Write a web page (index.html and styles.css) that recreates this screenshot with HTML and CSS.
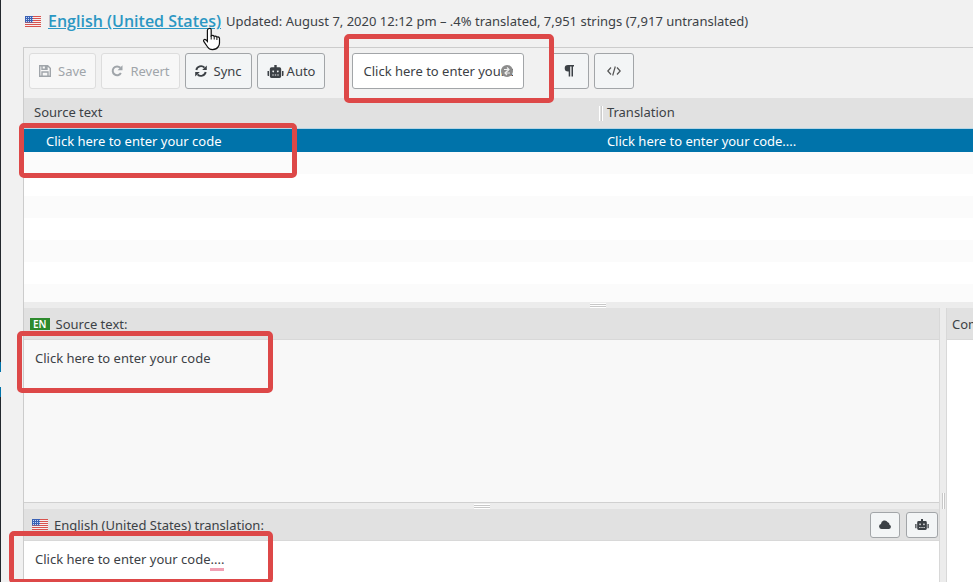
FILE: index.html
```html
<!DOCTYPE html>
<html lang="en">

<head>
    <meta charset="utf-8">
    <title>Translation editor</title>
    <link rel="stylesheet" href="styles.css">
</head>

<body>
  <svg class="defs" aria-hidden="true">
    <symbol id="flag" viewBox="0 0 16 11">
      <rect width="16" height="11" fill="#f6eeee"/>
      <path d="M0 .5h16M0 2.5h16M0 4.5h16M0 6.5h16M0 8.5h16M0 10.5h16" stroke="#d8524d"/>
      <rect width="8" height="6.500" fill="#3b62b5"/>
      <path d="M1 1.500h7M1 3.500h7M1 5.500h7" stroke="#c6d6f3" stroke-dasharray="1 1"/>
    </symbol>
    <symbol id="robot" viewBox="0 0 16 13">
      <path fill="currentColor" fill-rule="evenodd" d="M6.800 0h2.400v2.300h2.800q1.700 0 1.700 1.700v7.300q0 1.700-1.700 1.700h-8q-1.700 0-1.700-1.700v-7.300q0-1.700 1.700-1.700h2.800zM5.700 5.400a.9.900 0 1 0 .01 0zM10.300 5.400a.9.900 0 1 0 .01 0zM4.800 9.500v1h1.400v-1zM7.300 9.500v1h1.400v-1zM9.800 9.500v1h1.400v-1zM0 6h1.500v5h-.7q-.8 0-.8-.8zM14.500 6h1.500v4.200q0 .8-.8.800h-.7z"/>
    </symbol>
  </svg>

  <div class="menu-edge"></div>

  <main class="page">
    <header class="title">
      <svg class="flag"><use href="#flag"/></svg>
      <a href="#" class="locale">English (United States)</a>
      <span>Updated: August 7, 2020 12:12 pm – .4% translated, 7,951 strings (7,917 untranslated)</span>
    </header>

    <div class="editor">
      <form class="toolbar">
        <button type="button" class="btn" disabled>
          <svg width="12" height="12" viewBox="0 0 12 12" fill="none" stroke="currentColor" stroke-width="1.400"><path d="M.7.700h8l2.600 2.600v8h-10.600zM3 1v3.200h5v-3.200M3 11v-4h6v4M6.600 1v3"/></svg>
          Save
        </button>
        <button type="button" class="btn" disabled>
          <svg width="12" height="12" viewBox="0 0 12 12"><path d="M9.300 2.800a4.400 4.400 0 1 0 .6 5.300" fill="none" stroke="currentColor" stroke-width="2"/><path d="M11.500.3v5h-5z" fill="currentColor"/></svg>
          Revert
        </button>
        <button type="button" class="btn">
          <svg width="12" height="12" viewBox="0 0 12 12"><path d="M1.300 5a4.800 4.800 0 0 1 8.200-2.300M10.700 7a4.800 4.800 0 0 1-8.200 2.300" fill="none" stroke="currentColor" stroke-width="1.900"/><path d="M11.800.4v4.600h-4.600zM.2 11.600v-4.600h4.600z" fill="currentColor"/></svg>
          Sync
        </button>
        <button type="button" class="btn auto">
          <svg width="17" height="13"><use href="#robot"/></svg>
          Auto
        </button>
        <div class="search">
          <input type="text" aria-label="Filter translations" value="Click here to enter your code">
          <button type="button" class="clear" aria-label="Clear filter">
            <svg width="12" height="12" viewBox="0 0 12 12"><circle cx="6" cy="6" r="6" fill="#8c8c8c"/><path d="M3 4.500h4.500M6 2.500l2 2-2 2M9 8h-4.500M6 6l-2 2 2 2" fill="none" stroke="#eee" stroke-width="1.200"/></svg>
          </button>
        </div>
        <button type="button" class="btn square" aria-label="Toggle invisibles">
          <svg width="10" height="12" viewBox="0 0 10 12" fill="currentColor"><path d="M4 0h6v1.400h-1v10.100h-1.500v-10.100h-1.300v10.100h-1.500v-4.900h-.7a3.300 3.300 0 0 1 0-6.600z"/></svg>
        </button>
        <button type="button" class="btn square code" aria-label="Toggle code view">
          <svg width="14" height="10" viewBox="0 0 14 10" fill="none" stroke="currentColor" stroke-width="1.200"><path d="M4 1.500l-3.200 3.500 3.200 3.500M10 1.500l3.200 3.500-3.200 3.500M8.300.5l-2.600 9"/></svg>
        </button>
      </form>

      <table class="strings">
        <thead>
          <tr><th class="source">Source text</th><th>Translation</th></tr>
        </thead>
        <tbody>
          <tr class="selected"><td>Click here to enter your code</td><td>Click here to enter your code....</td></tr>
          <tr><td></td><td></td></tr>
          <tr><td></td><td></td></tr>
          <tr><td></td><td></td></tr>
          <tr><td></td><td></td></tr>
          <tr><td></td><td></td></tr>
          <tr><td></td><td></td></tr>
          <tr class="last"><td></td><td></td></tr>
        </tbody>
      </table>

      <div class="split main-split"><i class="grip"></i></div>

      <div class="panes">
        <div class="texts">
          <div class="bar">
            <span class="lang">EN</span>
            <label for="source">Source text:</label>
          </div>
          <textarea id="source" class="field source-field" readonly>Click here to enter your code</textarea>
          <div class="split"><i class="grip"></i></div>
          <div class="bar target">
            <svg class="flag"><use href="#flag"/></svg>
            <span id="target-label">English (United States) translation:</span>
            <button type="button" class="btn small" aria-label="Suggestions">
              <svg width="12" height="9" viewBox="0 0 12 9" fill="currentColor"><path d="M2.600 9a2.600 2.600 0 0 1-.6-5.100 3.600 3.600 0 0 1 6.700-1.700 2.200 2.200 0 0 1 1.700 2.500 2.200 2.200 0 0 1-.6 4.300z"/></svg>
            </button>
            <button type="button" class="btn small" aria-label="Auto translate">
              <svg width="14" height="11"><use href="#robot"/></svg>
            </button>
          </div>
          <div class="field target-field" contenteditable="true" role="textbox" spellcheck="false" aria-labelledby="target-label">Click here to enter your code<span class="misspelt">....</span></div>
        </div>
        <div class="split vertical"><i class="grip"></i></div>
        <div class="comments">
          <div class="bar"><label for="comments">Comments:</label></div>
          <textarea id="comments" class="field"></textarea>
        </div>
      </div>
    </div>
  </main>

  <!-- highlights and pointer, drawn over the editor -->
  <div class="mark mark-search"></div>
  <div class="mark mark-row"></div>
  <div class="mark mark-source"></div>
  <div class="mark mark-target"></div>
  <svg class="pointer" viewBox="0 0 18 24"><path d="M6 1.500q1.900-.6 2.200 1.300v6q1.800-1.200 3 .5 1.700-.8 2.600.8 2.500-.7 2.700 1.400v4.500q0 2-1.200 3.600-1.800 3-5.800 3-3.300 0-4.900-2.600l-3.700-5.300q-.9-1.600.5-2.200 1.200-.3 3 1.800v-11q0-1.300 1.600-1.800z" fill="#fff" stroke="#111" stroke-width="1.200"/><path d="M8.200 8.500v4M11.200 9.500v3M13.900 10.500v2.500" stroke="#111"/></svg>
</body>

</html>
```

FILE: styles.css
```css
* {
  box-sizing: border-box;
}

body {
  display: flex;
  height: 100vh;
  margin: 0;
  overflow: hidden;
  background: #f1f1f1;
  color: #3c4146;
  font-family: "Noto Sans", "Open Sans", sans-serif;
  font-size: 13px;
  line-height: 20px;
}

button, input, textarea {
  margin: 0;
  color: inherit;
  font: inherit;
}

svg {
  display: block;
  flex: none;
}

.defs {
  position: absolute;
  width: 0;
  height: 0;
}

.menu-edge {
  flex: none;
  width: 1px;
  background: linear-gradient(#23282d 362px, #0073aa 362px, #0073aa 372px, #f1f1f1 372px, #f1f1f1 387px, #0073aa 387px, #0073aa 397px, #23282d 397px);
}

.page {
  display: flex;
  flex: 1;
  flex-direction: column;
  min-width: 0;
  padding-left: 22px;
}

.title {
  display: flex;
  align-items: center;
  height: 47px;
  padding: 0 0 5px 2px;
  white-space: nowrap;
}

.flag {
  width: 16px;
  height: 11px;
}

.locale {
  margin: 0 5px 0 7px;
  color: #2b97c3;
  font-family: "Open Sans", sans-serif;
  font-size: 16px;
  font-weight: 600;
}

.editor {
  display: flex;
  flex: 1;
  flex-direction: column;
  min-height: 0;
  border: solid #ccc;
  border-width: 1px 0 0 1px;
}

/* toolbar */
.toolbar {
  display: flex;
  gap: 5px;
  padding: 5px 5px 9px;
}

.btn {
  display: flex;
  align-items: center;
  justify-content: center;
  gap: 7px;
  height: 36px;
  padding: 0 9px;
  border: 1px solid #a2a5a8;
  border-radius: 3px;
  background: #f3f5f6;
}

.btn:disabled {
  border-color: #ddd;
  background: #f7f7f7;
  color: #a0a5aa;
}

.auto {
  gap: 3px;
}

.square {
  width: 40px;
}

.code {
  color: #555;
}

.search {
  display: flex;
  align-items: center;
  width: 172px;
  height: 36px;
  margin: 0 20px 0 22px;
  padding: 0 10px;
  border: 1px solid #a2a5a8;
  border-radius: 3px;
  background: #fff;
}

.search input {
  flex: 1;
  min-width: 0;
  padding: 0;
  border: 0;
  outline: 0;
  background: none;
}

.clear {
  margin-left: -12px;
  padding: 0;
  border: 0;
  background: none;
}

/* strings list */
.strings {
  width: 100%;
  border-spacing: 0;
  table-layout: fixed;
  background: #fff;
}

.strings th {
  height: 31px;
  padding: 0 0 2px 4px;
  border-bottom: 1px solid #b5d5e5;
  background: #e1e1e1;
  font-weight: 400;
  text-align: left;
}

.strings .source {
  width: 61%;
  padding-left: 10px;
  background: linear-gradient(#fff, #fff) right 3px center / 1px 15px no-repeat, linear-gradient(#fff, #fff) right 0 center / 1px 15px no-repeat, linear-gradient(#ccc, #ccc) right 1px center / 1px 15px no-repeat, #e1e1e1;
}

.strings td {
  height: 22px;
  padding: 0 0 0 4px;
}

.strings td:first-child {
  padding-left: 22px;
}

.strings tr:nth-child(even) td {
  background: #fbfbfb;
}

.strings .selected td {
  height: 23px;
  background: #0073aa;
  color: #fff;
}

.strings .last td {
  height: 18px;
}

/* panes */
.split {
  display: flex;
  flex: none;
  align-items: center;
  justify-content: center;
  height: 6px;
  background: #ececec;
}

.main-split {
  padding-left: 21%;
}

.grip {
  width: 16px;
  height: 5px;
  border: solid #fff;
  border-width: 1px 0;
  background: linear-gradient(#c8c8c8 1px, #fff 1px, #fff 2px, #c8c8c8 2px);
}

.vertical {
  width: 8px;
  height: auto;
  padding-top: 112px;
  border: solid #d8d8d8;
  border-width: 0 1px;
}

.vertical .grip {
  width: 3px;
  height: 16px;
  border: 0;
  background: linear-gradient(90deg, #c8c8c8 1px, #fff 1px, #fff 2px, #c8c8c8 2px);
}

.panes {
  display: flex;
  flex: 1;
  min-height: 0;
}

.texts {
  display: flex;
  flex: 1;
  flex-direction: column;
  min-width: 0;
}

.comments {
  display: flex;
  flex: none;
  flex-direction: column;
  width: 26px;
  overflow: hidden;
}

.comments .bar {
  padding-left: 5px;
}

.bar {
  display: flex;
  flex: none;
  align-items: center;
  gap: 6px;
  height: 32px;
  padding: 0 1px 0 6px;
  border-bottom: 1px solid #d8d8d8;
  background: #e1e1e1;
  white-space: nowrap;
}

.target {
  padding-left: 8px;
}

.target span {
  flex: 1;
}

.lang {
  padding: 0 3px;
  background: #2d8a2d;
  color: #fff;
  font-size: 10px;
  font-weight: 600;
  line-height: 12px;
}

.small {
  width: 30px;
  height: 26px;
  padding: 0;
}

.small:last-child {
  width: 32px;
}

.field {
  flex: 3 1 0;
  min-height: 0;
  padding: 8px 11px 0;
  border: 0;
  outline: 0;
  background: #fff;
  resize: none;
}

.source-field {
  flex-grow: 14;
  border-bottom: 1px solid #d0d0d0;
  background: #f8f8f8;
}

.target-field {
  overflow: hidden;
}

.misspelt {
  border-bottom: 3px solid #f0a0b4;
}

/* highlights */
.mark {
  position: absolute;
  border: 5px solid #dd4848;
  border-radius: 5px;
}

.mark-search {
  left: 344px;
  top: 34px;
  width: 210px;
  height: 69px;
}

.mark-row {
  left: 19px;
  top: 123px;
  width: 278px;
  height: 55px;
}

.mark-source {
  left: 17px;
  top: 331px;
  width: 256px;
  height: 62px;
}

.mark-target {
  left: 9px;
  top: 531px;
  width: 264px;
  height: 53px;
}

.pointer {
  position: absolute;
  left: 203px;
  top: 27px;
  width: 18px;
  height: 24px;
}
```
